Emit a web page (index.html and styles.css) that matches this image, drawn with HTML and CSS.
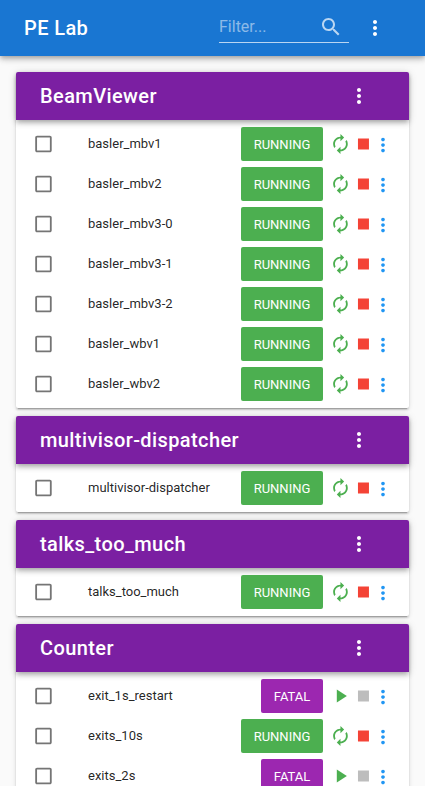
FILE: index.html
```html
<!DOCTYPE html>
<html lang="en">
<head>
<meta charset="utf-8">
<title>PE Lab</title>
<link rel="stylesheet" href="styles.css">
</head>
<body>
<svg class="sprite" aria-hidden="true">
  <symbol id="more" viewBox="0 0 24 24"><path d="M12 8c1.100 0 2-.9 2-2s-.9-2-2-2-2 .9-2 2 .9 2 2 2zm0 2c-1.100 0-2 .9-2 2s.9 2 2 2 2-.9 2-2-.9-2-2-2zm0 6c-1.100 0-2 .9-2 2s.9 2 2 2 2-.9 2-2-.9-2-2-2z"/></symbol>
  <symbol id="search" viewBox="0 0 24 24"><path d="M15.500 14h-.79l-.28-.27C15.410 12.590 16 11.110 16 9.500 16 5.910 13.090 3 9.500 3S3 5.910 3 9.500 5.910 16 9.500 16c1.610 0 3.090-.59 4.230-1.570l.27.28v.79l5 4.990L20.490 19l-4.990-5zm-6 0C7.010 14 5 11.990 5 9.500S7.010 5 9.500 5 14 7.010 14 9.500 11.990 14 9.500 14z"/></symbol>
  <symbol id="box" viewBox="-0.5 0 24 24"><path d="M19 5v14H5V5h14m0-2H5c-1.100 0-2 .9-2 2v14c0 1.100.9 2 2 2h14c1.100 0 2-.9 2-2V5c0-1.100-.9-2-2-2z"/></symbol>
  <symbol id="renew" viewBox="-0.5 0 24 24"><path d="M12 6v3l4-4-4-4v3c-4.420 0-8 3.580-8 8 0 1.570.46 3.030 1.240 4.260L6.700 14.800c-.45-.83-.7-1.790-.7-2.800 0-3.310 2.690-6 6-6zm6.760 1.740L17.300 9.200c.44.84.7 1.790.7 2.800 0 3.310-2.690 6-6 6v-3l-4 4 4 4v-3c4.420 0 8-3.580 8-8 0-1.570-.46-3.030-1.240-4.260z"/></symbol>
  <symbol id="play" viewBox="-0.5 0 24 24"><path d="M8 5v14l11-7z"/></symbol>
  <symbol id="stop" viewBox="-0.5 0 24 24"><path d="M6 6h12v12H6z"/></symbol>
</svg>
<header class="toolbar">
  <h1 class="title">PE Lab</h1>
  <label class="filter"><input class="filter-input" type="text" placeholder="Filter..."><svg class="icon-search"><use href="#search"/></svg></label>
  <svg class="icon-menu"><use href="#more"/></svg>
</header>
<main class="groups" id="groups"></main>
<script src="app.js"></script>
</body>
</html>
```
FILE: styles.css
```css
* { box-sizing: border-box; }
html, body { height: 100%; }
body {
  margin: 0;
  overflow: hidden;
  background: #fafafa;
  color: rgba(0, 0, 0, .87);
  font-family: Roboto, sans-serif;
  font-size: 13px;
}
.sprite { display: none; }
svg { display: block; fill: currentColor; flex: none; }

.toolbar {
  position: relative;
  display: flex;
  align-items: center;
  height: 56px;
  padding: 0 38px 0 24px;
  background: #1976d2;
  color: #fff;
  box-shadow: 0 2px 4px -1px rgba(0, 0, 0, .2), 0 4px 5px 0 rgba(0, 0, 0, .14), 0 1px 10px 0 rgba(0, 0, 0, .12);
}
.title {
  flex: 1;
  margin: 0;
  font-size: 20px;
  font-weight: 500;
  line-height: 24px;
  letter-spacing: .02em;
}
.filter {
  display: flex;
  align-items: center;
  width: 130px;
  height: 32px;
  margin: 0 14px 2px 0;
  padding-right: 6px;
  border-bottom: 1px solid rgba(255, 255, 255, .7);
}
.filter-input {
  flex: 1;
  min-width: 0;
  padding: 0;
  border: 0;
  outline: 0;
  background: none;
  color: #fff;
  font: 16px/20px Roboto, sans-serif;
}
.filter-input::placeholder { color: rgba(255, 255, 255, .5); }
.icon-search { width: 24px; height: 24px; color: rgba(255, 255, 255, .7); }
.icon-menu { width: 24px; height: 24px; }

.groups { display: grid; gap: 8px; padding: 16px; }
.card {
  background: #fff;
  border-radius: 2px;
  box-shadow: 0 3px 1px -2px rgba(0, 0, 0, .2), 0 2px 2px 0 rgba(0, 0, 0, .14), 0 1px 5px 0 rgba(0, 0, 0, .12);
}
.card-head {
  display: flex;
  align-items: center;
  height: 48px;
  padding: 0 38px 0 24px;
  border-radius: 2px 2px 0 0;
  background: #7b1fa2;
  color: #fff;
  box-shadow: 0 2px 4px -1px rgba(0, 0, 0, .2), 0 4px 5px 0 rgba(0, 0, 0, .14), 0 1px 10px 0 rgba(0, 0, 0, .12);
}
.list { padding: 4px 0; }
.row {
  display: grid;
  grid-template-columns: 56px 1fr auto 23px 20px 22px;
  align-items: center;
  height: 40px;
  padding: 0 15px 0 16px;
}
.row svg { width: 22px; height: 22px; }
.check { color: rgba(0, 0, 0, .54); }
.name { line-height: 20px; }
.state {
  height: 34px;
  margin-right: 5.700px;
  padding: 0 13px;
  border-radius: 2px;
  color: #fff;
  line-height: 35px;
}
.running { background: #4caf50; }
.fatal { background: #9c27b0; }
.green { color: #4caf50; }
.red { color: #f44336; }
.grey { color: #bdbdbd; }
.blue { color: #2196f3; margin-top: 1px; }
```
FILE: app.js
```js
const groups = [
  ['BeamViewer', ['basler_mbv1', 'basler_mbv2', 'basler_mbv3-0', 'basler_mbv3-1', 'basler_mbv3-2', 'basler_wbv1', 'basler_wbv2']],
  ['multivisor-dispatcher', ['multivisor-dispatcher']],
  ['talks_too_much', ['talks_too_much']],
  ['Counter', ['exit_1s_restart', 'exits_10s', 'exits_2s']],
];
const fatal = new Set(['exit_1s_restart', 'exits_2s']);
const icon = (id, cls) => `<svg class="${cls}"><use href="#${id}"/></svg>`;

const row = (name) => {
  const down = fatal.has(name);
  return `<div class="row">${icon('box', 'check')}<span class="name">${name}</span>
    <span class="state ${down ? 'fatal' : 'running'}">${down ? 'FATAL' : 'RUNNING'}</span>
    ${icon(down ? 'play' : 'renew', 'green')}${icon('stop', down ? 'grey' : 'red')}${icon('more', 'blue')}</div>`;
};

document.getElementById('groups').innerHTML = groups.map(([title, names]) =>
  `<section class="card"><div class="card-head"><h2 class="title">${title}</h2>${icon('more', 'icon-menu')}</div>
  <div class="list">${names.map(row).join('')}</div></section>`).join('');
```
